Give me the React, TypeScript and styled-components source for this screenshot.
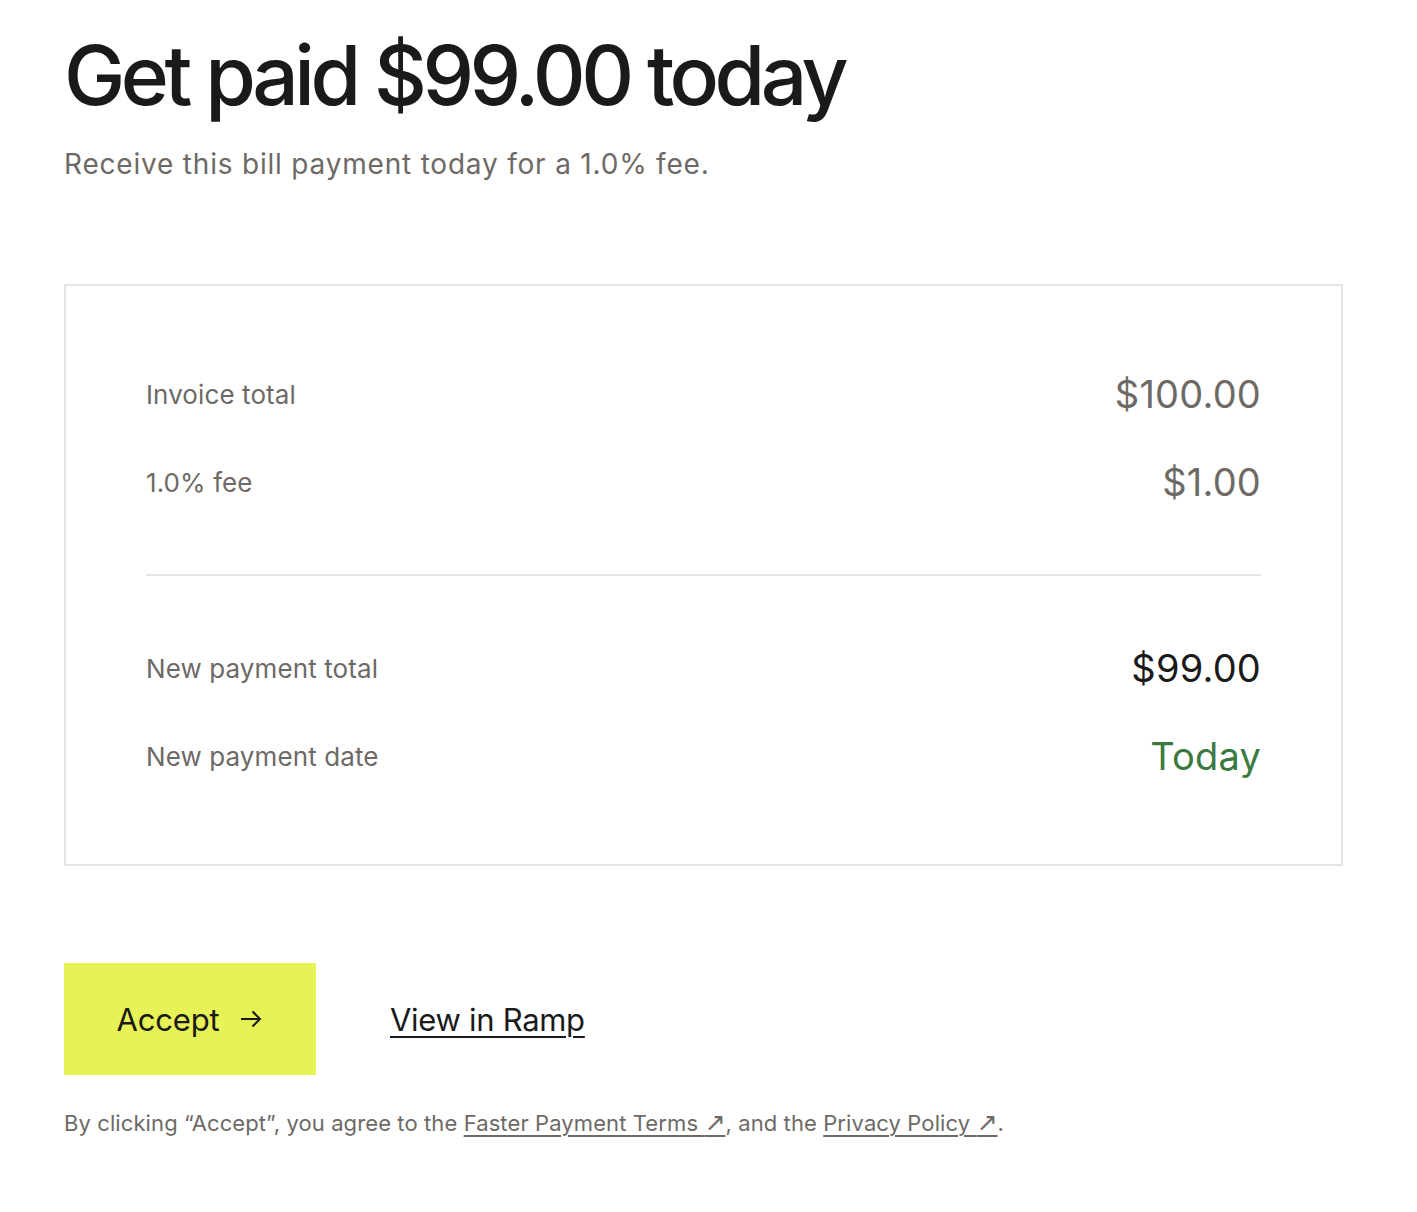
import styled, { createGlobalStyle } from "styled-components";

const GlobalStyle = createGlobalStyle`
  html, body {
    margin: 0;
    padding: 0;
    background: #ffffff;
  }
  body {
    font-family: Inter, "Liberation Sans", sans-serif;
    color: #1a1a1a;
  }
`;

const rows = [
  { label: "Invoice total", value: "$100.00", tone: "muted" },
  { label: "1.0% fee", value: "$1.00", tone: "muted" },
];

const totals = [
  { label: "New payment total", value: "$99.00", tone: "strong" },
  { label: "New payment date", value: "Today", tone: "positive" },
];

const toneColors: Record<string, string> = {
  muted: "#6d6a66",
  strong: "#1a1a1a",
  positive: "#3b7a3f",
};

const ArrowRight = () => (
  <svg width="24" height="24" viewBox="0 0 24 24" fill="none">
    <path
      d="M2 12h19M13.5 4.5L21 12l-7.5 7.5"
      stroke="currentColor"
      strokeWidth="2"
      strokeLinejoin="miter"
    />
  </svg>
);

const App = () => {
  return (
    <Page>
      <GlobalStyle />
      <Title>Get paid $99.00 today</Title>
      <Subtitle>Receive this bill payment today for a 1.0% fee.</Subtitle>

      <Summary>
        <Group>
          {rows.map((row) => (
            <Row key={row.label}>
              <Label>{row.label}</Label>
              <Value $tone={row.tone}>{row.value}</Value>
            </Row>
          ))}
        </Group>
        <Divider />
        <Group>
          {totals.map((row) => (
            <Row key={row.label}>
              <Label>{row.label}</Label>
              <Value $tone={row.tone}>{row.value}</Value>
            </Row>
          ))}
        </Group>
      </Summary>

      <Actions>
        <AcceptButton type="button">
          Accept
          <ArrowRight />
        </AcceptButton>
        <TextLink href="#">View in Ramp</TextLink>
      </Actions>

      <Legal>
        By clicking “Accept”, you agree to the{" "}
        <LegalLink href="#">
          Faster Payment Terms <Glyph>↗</Glyph>
        </LegalLink>
        , and the{" "}
        <LegalLink href="#">
          Privacy Policy <Glyph>↗</Glyph>
        </LegalLink>
        .
      </Legal>
    </Page>
  );
};

const Page = styled.main`
  width: 1279px;
  padding: 28px 0 60px 64px;
  display: flex;
  flex-direction: column;
`;

const Title = styled.h1`
  margin: 0;
  font-size: 82px;
  font-weight: 500;
  line-height: 96px;
  letter-spacing: -4.5px;
  color: #1a1a1a;
`;

const Subtitle = styled.p`
  margin: 22px 0 0;
  font-size: 28px;
  line-height: 36px;
  letter-spacing: 0.8px;
  color: #6d6a66;
`;

const Summary = styled.section`
  margin-top: 102px;
  border: 2px solid #e6e4e1;
  padding: 86px 80px;
  display: flex;
  flex-direction: column;
`;

const Group = styled.div`
  display: flex;
  flex-direction: column;
  gap: 44px;
`;

const Row = styled.div`
  display: flex;
  justify-content: space-between;
  align-items: center;
  height: 44px;
`;

const Label = styled.span`
  font-size: 26px;
  letter-spacing: 0.1px;
  color: #6d6a66;
`;

const Value = styled.span<{ $tone: string }>`
  font-size: 38px;
  letter-spacing: 0.2px;
  color: ${(p) => toneColors[p.$tone]};
`;

const Divider = styled.hr`
  margin: 70px 0 70px;
  border: 0;
  border-top: 2px solid #e6e4e1;
`;

const Actions = styled.div`
  margin-top: 97px;
  display: flex;
  align-items: center;
  gap: 74px;
`;

const AcceptButton = styled.button`
  width: 252px;
  height: 112px;
  border: 0;
  background: #e7f256;
  display: flex;
  align-items: center;
  justify-content: center;
  gap: 20px;
  font-family: inherit;
  font-size: 31px;
  letter-spacing: -0.2px;
  color: #1a1a1a;
  cursor: pointer;
`;

const TextLink = styled.a`
  font-size: 31px;
  letter-spacing: -0.3px;
  color: #1a1a1a;
  text-decoration: underline;
  text-decoration-thickness: 2px;
  text-underline-offset: 5px;
`;

const Legal = styled.p`
  margin: 34px 0 0;
  font-size: 22px;
  line-height: 28px;
  letter-spacing: 0.1px;
  color: #6d6a66;
`;

const LegalLink = styled.a`
  color: #6d6a66;
  text-decoration: underline;
  text-decoration-thickness: 2px;
  text-underline-offset: 4px;
`;

const Glyph = styled.span`
  font-family: "DejaVu Sans", sans-serif;
  font-size: 25px;
  line-height: 0;
`;

export default App;
